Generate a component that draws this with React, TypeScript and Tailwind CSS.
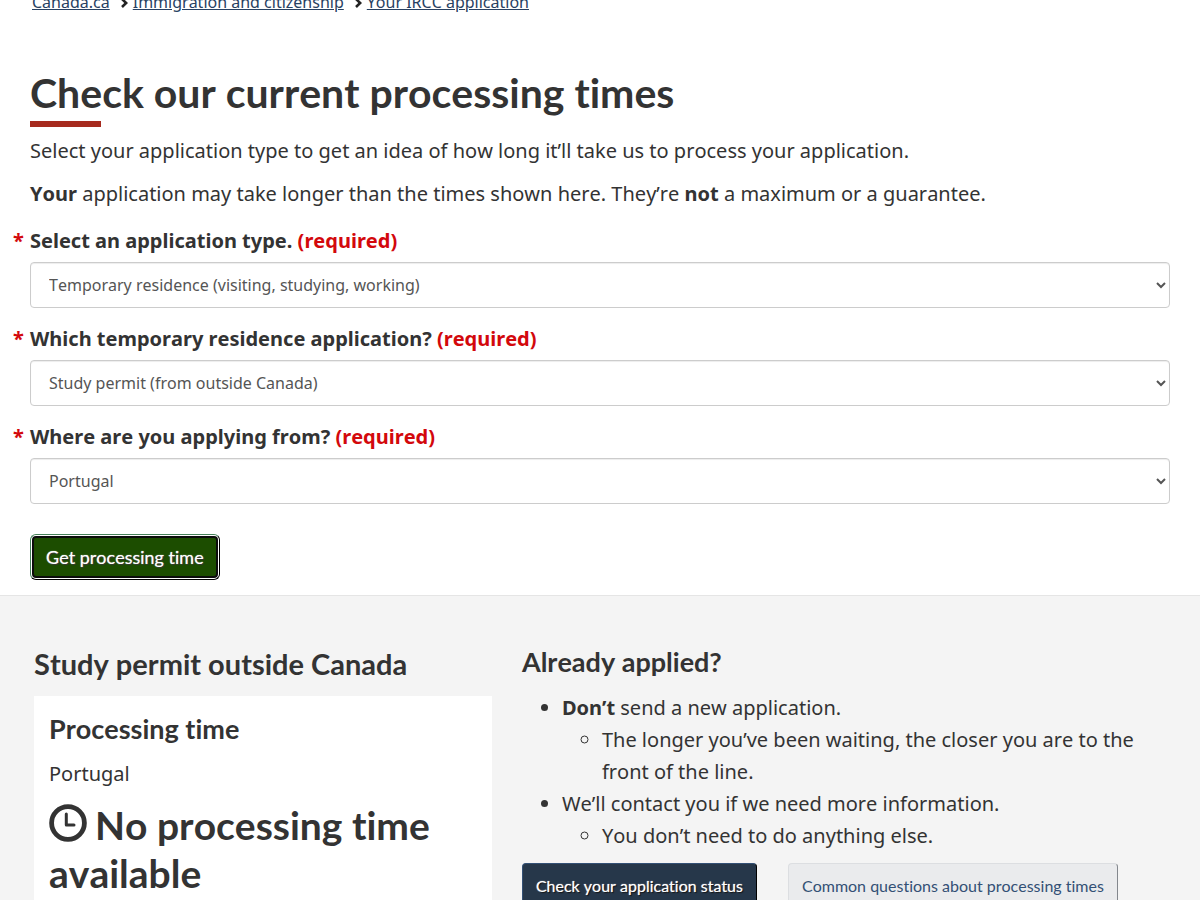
import type { ReactNode } from "react";

const heading = "font-['Lato',sans-serif] font-bold text-[#333]";

function Crumb({ href, children }: { href: string; children: ReactNode }) {
  return (
    <a href={href} className="text-[#284162] underline">
      {children}
    </a>
  );
}

function Chevron() {
  return (
    <svg aria-hidden="true" viewBox="0 0 8 10" className="mt-0.5 ml-2.5 mr-1 h-2.5 w-2">
      <path d="M2 1 L6.2 5 L2 9" fill="none" stroke="#222" strokeWidth="2.6" />
    </svg>
  );
}

function Field({ id, label, options }: { id: string; label: string; options: string[] }) {
  return (
    <div className="mb-[15px]">
      <label htmlFor={id} className="-ml-[17px] mb-[5px] flex font-bold leading-8">
        <span aria-hidden="true" className="w-[17px] shrink-0 text-[#d3080c]">
          *
        </span>
        <span>
          {label} <span className="text-[#d3080c]">(required)</span>
        </span>
      </label>
      <select
        id={id}
        className="h-[46px] w-full rounded border border-[#ccc] bg-white px-3.5 text-base text-[#555] shadow-[inset_0_1px_1px_rgba(0,0,0,0.075)]"
      >
        {options.map((option) => (
          <option key={option}>{option}</option>
        ))}
      </select>
    </div>
  );
}

function ClockIcon() {
  return (
    <svg aria-hidden="true" viewBox="0 0 38 38" className="-mb-0.5 mr-2 inline-block size-[38px] align-baseline">
      <circle cx="19" cy="19" r="16.4" fill="none" stroke="#333" strokeWidth="4.8" />
      <path d="M17.3 10 V20.9 H25" fill="none" stroke="#333" strokeWidth="3" strokeLinecap="round" strokeLinejoin="round" />
    </svg>
  );
}

export default function App() {
  return (
    <div className="min-h-screen overflow-hidden bg-white font-['Noto_Sans',sans-serif] text-xl leading-8 text-[#333] [font-kerning:none] [font-variant-ligatures:none]">
      <nav aria-label="Breadcrumb" className="-mt-2.5 px-8 text-base leading-6">
        <ol className="flex">
          <li className="flex items-center">
            <Crumb href="#home">Canada.ca</Crumb>
            <Chevron />
          </li>
          <li className="ml-px flex items-center">
            <Crumb href="#immigration">Immigration and citizenship</Crumb>
            <Chevron />
          </li>
          <li className="ml-px">
            <Crumb href="#application">Your IRCC application</Crumb>
          </li>
        </ol>
      </nav>

      <main>
        <div className="px-[30px] pb-[15px]">
          <h1 className={`${heading} pt-[55px] text-[41px] leading-[48px]`}>Check our current processing times</h1>
          <div className="mt-1 h-1.5 w-[71px] bg-[#a62a1e]" />
          <p className="mt-2 mb-[11px]">
            Select your application type to get an idea of how long it’ll take us to process your application.
          </p>
          <p className="mb-[15px]">
            <strong>Your</strong> application may take longer than the times shown here. They’re <strong>not</strong> a
            maximum or a guarantee.
          </p>
          <form onSubmit={(event) => event.preventDefault()}>
            <Field
              id="application-type"
              label="Select an application type."
              options={["Temporary residence (visiting, studying, working)"]}
            />
            <Field
              id="residence-type"
              label="Which temporary residence application?"
              options={["Study permit (from outside Canada)"]}
            />
            <Field id="country" label="Where are you applying from?" options={["Portugal"]} />
            <button
              type="submit"
              className="mt-[30px] block h-[46px] rounded-md border border-t-[#458259] border-r-black border-b-black border-l-[#458259] bg-white p-px font-['Lato',sans-serif] text-lg leading-6 text-white"
            >
              <span className="flex h-full items-center rounded border-2 border-[#0c0c0c] bg-[#1c4d00] px-3 [text-shadow:1px_1px_1px_#333,0_0_1px_#fff]">
                Get processing time
              </span>
            </button>
          </form>
        </div>

        <section className="flex min-h-[320px] border-t border-[#e5e5e5] bg-[#f4f4f4] pt-[50px] pr-2.5 pl-[19px]">
          <div className="w-5/12 px-[15px]">
            <h2 className={`${heading} mb-3.5 text-[29px] leading-9`}>Study permit outside Canada</h2>
            <div className="bg-white px-[15px] pt-[15px]">
              <h3 className={`${heading} mb-[11px] text-[27px] leading-9`}>Processing time</h3>
              <p>Portugal</p>
              <p className={`${heading} mt-[11px] pb-4 text-[39px] leading-[48px]`}>
                <ClockIcon />
                No processing time available
              </p>
            </div>
          </div>
          <div className="w-7/12 px-[15px]">
            <h2 className={`${heading} mb-3.5 text-[27px] leading-8`}>Already applied?</h2>
            <ul className="list-disc pl-10">
              <li>
                <strong>Don’t</strong> send a new application.
                <ul className="list-[circle] pl-10">
                  <li>The longer you’ve been waiting, the closer you are to the front of the line.</li>
                </ul>
              </li>
              <li>
                We’ll contact you if we need more information.
                <ul className="list-[circle] pl-10">
                  <li>You don’t need to do anything else.</li>
                </ul>
              </li>
            </ul>
            <div className="mt-[11px] flex gap-[31px] font-['Lato',sans-serif] text-base leading-6">
              <a
                href="#status"
                className="rounded border border-t-[#335075] border-r-black border-b-black border-l-[#335075] bg-[#26374a] px-[13px] py-2.5 text-white [text-shadow:1px_1px_1px_#111,0_0_1px_#fff]"
              >
                Check your application status
              </a>
              <a
                href="#questions"
                className="rounded border border-t-[#dcdee1] border-r-[#83878d] border-b-[#83878d] border-l-[#dcdee1] bg-[#eaebed] px-[13px] py-2.5 text-[#335075]"
              >
                Common questions about processing times
              </a>
            </div>
          </div>
        </section>
      </main>
    </div>
  );
}
